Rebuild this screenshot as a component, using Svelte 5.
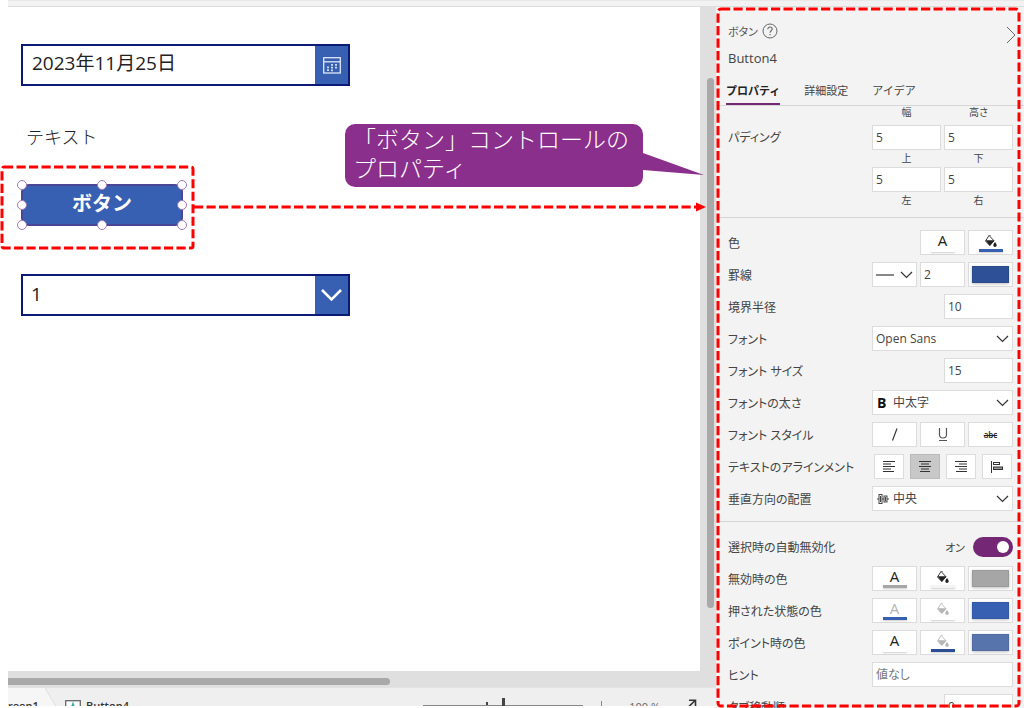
<script lang="ts">
	type Swatch = { id: string; label: string; text: string; textDim: boolean; fill: string; fillDim: boolean; border: string };

	const stateColors: Swatch[] = [
		{ id: 'disabled', label: '無効時の色', text: '#a6a6a6', textDim: false, fill: '#f4f4f4', fillDim: false, border: '#a6a6a6' },
		{ id: 'pressed', label: '押された状態の色', text: '#3860b2', textDim: true, fill: '#ffffff', fillDim: true, border: '#3860b2' },
		{ id: 'hover', label: 'ポイント時の色', text: '#ffffff', textDim: false, fill: '#2d4e95', fillDim: true, border: '#5874ad' }
	];
	const tabs = ['プロパティ', '詳細設定', 'アイデア'];
	const handles = ['nw', 'n', 'ne', 'w', 'e', 'sw', 's', 'se'];
	const aligns = [
		{ id: 'left', label: '左揃え' },
		{ id: 'center', label: '中央揃え' },
		{ id: 'right', label: '右揃え' },
		{ id: 'justify', label: '両端揃え' }
	];

	let activeTab = $state('プロパティ');
	let align = $state('center');
	let date = $state('2023年11月25日');
	let autoDisable = $state(true);
	let zoom = $state(50);
	let padding = $state({ top: 5, bottom: 5, left: 5, right: 5 });
</script>

{#snippet chevron()}
	<svg class="chevron" width="13" height="8" viewBox="0 0 13 8"><path d="M1 1l5.5 5.5L12 1" fill="none" stroke="#333" stroke-width="1.2" /></svg>
{/snippet}

{#snippet textColor(color: string, dim: boolean)}
	<button class="box" class:dim aria-label="文字の色">
		<span class="letter">A</span>
		<span class="bar" style="background: {color}"></span>
	</button>
{/snippet}

{#snippet fillColor(color: string, dim: boolean)}
	<button class="box" class:dim aria-label="塗りつぶしの色">
		<svg class="bucket" width="14" height="14" viewBox="0 0 14 14">
			<path d="M5.2 1.2L1.5 7l4.3 4.5L10 6.8 6 2.5V1" fill="none" stroke="currentColor" stroke-width="0.9" />
			<path d="M1.5 6.2h8.8l-4.5 5.5z" fill="currentColor" />
			<path d="M11 8c1 1.6 1.7 2.3 1.7 3.3a1.7 1.7 0 0 1-3.4 0c0-1 .7-1.700 1.700-3.300z" fill="currentColor" />
		</svg>
		<span class="bar" style="background: {color}"></span>
	</button>
{/snippet}

{#snippet borderColor(color: string)}
	<button class="box" aria-label="罫線の色"><span class="swatch" style="background: {color}"></span></button>
{/snippet}

<div class="studio">
	<div class="ribbon"></div>
	<div class="main">
		<div class="workspace">
			<div class="scroller">
				<main class="stage">
					<div class="field">
						<input class="date" aria-label="日付" bind:value={date} />
						<button class="field-button" aria-label="カレンダー">
							<svg width="18" height="17" viewBox="0 0 18 17" fill="none" stroke="#dfe7f6">
								<rect x="0.7" y="0.7" width="16.6" height="15.3" stroke-width="1.3" />
								<path d="M1 4.8h16" stroke-width="1.3" />
								<path d="M5 9.5v5M9 7v7.5M13 7v5" stroke-width="1.8" stroke-dasharray="1.8 0.9" />
							</svg>
						</button>
					</div>
					<p class="text">テキスト</p>
					<div class="selection">
						<button class="app-button">ボタン</button>
						{#each handles as h}
							<span class="handle {h}"></span>
						{/each}
						<svg class="mark"><rect width="100%" height="100%" rx="2" /></svg>
					</div>
					<div class="field">
						<select class="number" aria-label="ドロップダウン"><option>1</option><option>2</option><option>3</option></select>
						<span class="field-button">
							<svg width="21" height="13" viewBox="0 0 21 13"><path d="M1 1l9.5 9.5L20 1" fill="none" stroke="#fff" stroke-width="2.5" /></svg>
						</span>
					</div>
				</main>
				<div class="vscroll"><span></span></div>
			</div>
			<div class="hscroll"><span></span></div>
			<footer class="status">
				<a class="crumb" href="#screen">reen1</a>
				<svg class="slope" width="12" height="20" viewBox="0 0 12 20"><path d="M0 0l12 20H0z" fill="#f6f6f6" /><path d="M0 0l12 20" stroke="#dedede" /></svg>
				<svg class="control-icon" width="16" height="12" viewBox="0 0 16 12">
					<rect x="0.7" y="0.7" width="14.6" height="13" fill="#fff" stroke="#666" stroke-width="1.3" />
					<path d="M5.5 11L8 3.5l2.5 7.500" fill="none" stroke="#2fb5a8" stroke-width="1.5" />
				</svg>
				<a class="control-name" href="#button4">Button4</a>
				<input class="zoom" type="range" min="0" max="100" aria-label="ズーム" bind:value={zoom} />
				<span class="separator"></span>
				<span class="percent">100 %</span>
				<svg class="expand" width="10" height="10" viewBox="0 0 10 10"><path d="M0.5 9L8 1.5M2 1.2h6.5v6" fill="none" stroke="#333" stroke-width="1.6" /></svg>
			</footer>

			<svg class="connector" height="10">
				<line x1="0" y1="5" x2="100%" y2="5" />
			</svg>
			<svg class="arrow" width="10" height="10" viewBox="0 0 10 10"><path d="M0 0.5L10 5 0 9.5z" fill="#f00" /></svg>
			<div class="callout">
				「ボタン」コントロールの<br />プロパティ
				<svg class="tail" width="62" height="24" viewBox="0 0 62 24"><path d="M0 0l61 22L0 17z" fill="#8b2f8c" /></svg>
			</div>
		</div>

		<aside class="panel">
			<header>
				<div class="kind">
					ボタン
					<svg width="16" height="16" viewBox="0 0 16 16" fill="none" stroke="#666">
						<circle cx="8" cy="8" r="7" />
						<path d="M5.8 6.2c0-1.4 1-2.2 2.2-2.2s2.2.8 2.2 2c0 1.7-2.2 1.8-2.2 3.8M8 11v1.3" stroke-width="1.1" />
					</svg>
					<button class="collapse" aria-label="折りたたむ">
						<svg width="10" height="18" viewBox="0 0 10 18"><path d="M1 1l8 8-8 8" fill="none" stroke="#666" /></svg>
					</button>
				</div>
				<h1>Button4</h1>
				<nav>
					{#each tabs as tab}
						<button class="tab" class:active={tab === activeTab} onclick={() => (activeTab = tab)}>{tab}</button>
					{/each}
				</nav>
			</header>

			<section class="padding">
				<span class="name">パディング</span>
				<div class="pads">
					<span class="size">幅</span>
					<span class="size">高さ</span>
					<label><input bind:value={padding.top} />上</label>
					<label><input bind:value={padding.bottom} />下</label>
					<label><input bind:value={padding.left} />左</label>
					<label><input bind:value={padding.right} />右</label>
				</div>
			</section>

			<section>
				<div class="row">
					<span class="name">色</span>
					{@render textColor('#ffffff', false)}
					{@render fillColor('#3860b2', false)}
				</div>
				<div class="row">
					<label class="name" for="border">罫線</label>
					<button class="box line" aria-label="罫線のスタイル">
						<svg width="18" height="2" viewBox="0 0 18 2"><path d="M0 1h18" stroke="#555" stroke-width="1.4" /></svg>
						{@render chevron()}
					</button>
					<input id="border" class="narrow" value="2" />
					{@render borderColor('#2d5096')}
				</div>
				<div class="row">
					<label class="name" for="radius">境界半径</label>
					<input id="radius" value="10" />
				</div>
				<div class="row">
					<label class="name" for="font">フォント</label>
					<div class="picker">
						<select id="font"><option>Open Sans</option><option>Lato</option></select>
						{@render chevron()}
					</div>
				</div>
				<div class="row">
					<label class="name" for="font-size">フォント サイズ</label>
					<input id="font-size" value="15" />
				</div>
				<div class="row">
					<label class="name" for="weight">フォントの太さ</label>
					<div class="picker with-icon">
						<select id="weight"><option>中太字</option><option>標準</option></select>
						<b>B</b>
						{@render chevron()}
					</div>
				</div>
				<div class="row">
					<span class="name">フォント スタイル</span>
					<button class="box" aria-label="斜体">
						<svg width="8" height="13" viewBox="0 0 8 13"><path d="M6 0.5L1.5 12.5" stroke="#333" stroke-width="1.2" /></svg>
					</button>
					<button class="box" aria-label="下線">
						<svg width="12" height="14" viewBox="0 0 12 14" fill="none" stroke="#555"><path d="M2.5 0v6.5a3.5 3.5 0 0 0 7 0V0M2 12.5h8" stroke-width="1.2" /></svg>
					</button>
					<button class="box strike" aria-label="取り消し線"><s>abc</s></button>
				</div>
				<div class="row">
					<span class="name">テキストのアラインメント</span>
					<div class="aligns">
						{#each aligns as a}
							<button class="box" class:on={a.id === align} aria-label={a.label} onclick={() => (align = a.id)}>
								<svg width="14" height="14" viewBox="0 0 14 14" fill="none" stroke="#333">
									{#if a.id === 'left'}
										<path d="M1 1.5h12M1 4h8M1 6.500h12M1 9h8M1 11.500h11" />
									{:else if a.id === 'center'}
										<path d="M1 1.5h12M3 4h8M1 6.500h12M3 9h8M2 11.500h10" />
									{:else if a.id === 'right'}
										<path d="M1 1.5h12M5 4h8M1 6.500h12M5 9h8M2 11.500h11" />
									{:else}
										<path d="M1.5 1v12" />
										<rect x="3.5" y="2.5" width="6" height="2" />
										<rect x="3.5" y="7" width="9" height="2.5" fill="#999" />
									{/if}
								</svg>
							</button>
						{/each}
					</div>
				</div>
				<div class="row">
					<label class="name" for="valign">垂直方向の配置</label>
					<div class="picker with-icon">
						<select id="valign"><option>中央</option><option>上</option><option>下</option></select>
						<svg class="lead" width="12" height="12" viewBox="0 0 12 12" fill="none" stroke="#444">
							<path d="M0 6h2M5 6h2M10 6h2M3.5 3v6M8.500 4v4" />
							<rect x="2" y="1.5" width="3" height="9" />
							<rect x="7" y="3" width="3" height="6" />
						</svg>
						{@render chevron()}
					</div>
				</div>
			</section>

			<section>
				<div class="row">
					<label class="name" for="auto-disable">選択時の自動無効化</label>
					<span class="on-text">{autoDisable ? 'オン' : 'オフ'}</span>
					<input id="auto-disable" class="toggle" type="checkbox" role="switch" bind:checked={autoDisable} />
				</div>
				{#each stateColors as c (c.id)}
					<div class="row">
						<span class="name">{c.label}</span>
						{@render textColor(c.text, c.textDim)}
						{@render fillColor(c.fill, c.fillDim)}
						{@render borderColor(c.border)}
					</div>
				{/each}
				<div class="row">
					<label class="name" for="hint">ヒント</label>
					<input id="hint" class="wide" placeholder="値なし" />
				</div>
				<div class="row">
					<label class="name" for="tab-index">タブ移動順</label>
					<input id="tab-index" value="0" />
				</div>
			</section>
			<svg class="mark"><rect width="100%" height="100%" rx="3" /></svg>
		</aside>
	</div>
</div>

<style>
	:global(body) {
		background: #fff;
	}

	.studio {
		--blue: #3860b2;
		--navy: #0b1a75;
		--purple: #742774;
		--line: #dcdcdc;
		display: flex;
		flex-direction: column;
		box-sizing: border-box;
		height: 100vh;
		padding-left: 8px;
		overflow: hidden;
		font-family: 'Open Sans', 'Noto Sans CJK JP', sans-serif;
		font-size: 12px;
		color: #444;
	}

	.studio * {
		box-sizing: border-box;
	}

	button,
	input,
	select {
		font: inherit;
		color: inherit;
		margin: 0;
		border-radius: 0;
	}

	button {
		padding: 0;
		border: 0;
		background: none;
	}

	select {
		appearance: none;
		border: 0;
		background: none;
	}

	.ribbon {
		height: 7px;
		flex: none;
		background: #f2f2f2;
		border-top: 1px solid #e8e8e8;
		border-bottom: 1px solid #dedede;
	}

	.main {
		display: flex;
		flex: 1;
		min-height: 0;
	}

	.workspace {
		position: relative;
		display: flex;
		flex-direction: column;
		flex: 1;
		min-width: 0;
		padding-bottom: 2px;
	}

	.scroller {
		display: flex;
		flex: 1;
		min-height: 0;
		background: #dfdfdf;
	}

	.stage {
		flex: 1;
		display: flex;
		flex-direction: column;
		align-items: flex-start;
		padding: 37px 13px;
		background: #fff;
		color: #222;
	}

	.field {
		display: flex;
		width: 329px;
		height: 42px;
		flex: none;
		border: 2px solid var(--navy);
		background: #fff;
	}

	.field .date,
	.field .number {
		flex: 1;
		min-width: 0;
		border: 0;
		background: none;
		font-size: 19px;
		padding: 0 9px 6px;
	}

	.field .number {
		padding: 0 8px 2px;
	}

	.field-button {
		display: flex;
		align-items: center;
		justify-content: center;
		width: 33px;
		background: var(--blue);
	}

	.text {
		margin: 37px 0 0;
		padding-left: 5px;
		font-size: 18px;
		font-weight: 300;
		line-height: 28px;
	}

	.selection {
		position: relative;
		width: 162px;
		height: 42px;
		margin: 33px 0 48px;
	}

	.app-button {
		width: 100%;
		height: 100%;
		padding-bottom: 5px;
		border: 2px solid #4b4596;
		border-radius: 8px;
		background: var(--blue);
		color: #fff;
		font-size: 20px;
		font-weight: 700;
	}

	.handle {
		position: absolute;
		width: 10px;
		height: 10px;
		margin: -5px;
		border: 1px solid #a07ab0;
		border-radius: 50%;
		background: #fff;
	}

	.nw, .n, .ne {
		top: 1px;
	}

	.w, .e {
		top: 50%;
	}

	.sw, .s, .se {
		top: calc(100% - 1px);
	}

	.nw, .w, .sw {
		left: 1px;
	}

	.n, .s {
		left: 50%;
	}

	.ne, .e, .se {
		left: calc(100% - 1px);
	}

	.mark {
		position: absolute;
		overflow: visible;
		pointer-events: none;
	}

	.mark rect,
	.connector line {
		fill: none;
		stroke: #f00;
		stroke-width: 3;
		stroke-dasharray: 9.2 3.3;
	}

	.selection .mark {
		left: -19px;
		top: -17px;
		width: 191px;
		height: 81px;
	}

	.vscroll {
		width: 16px;
		padding: 71px 2px 63px 7px;
	}

	.vscroll span {
		display: block;
		height: 100%;
		border-radius: 4px;
		background: #a9a9a9;
	}

	.hscroll {
		height: 16px;
		flex: none;
		padding: 7px 0 2px;
		background: #dfdfdf;
	}

	.hscroll span {
		display: block;
		width: 54%;
		height: 7px;
		border-radius: 0 4px 4px 0;
		background: #a9a9a9;
	}

	.status {
		display: flex;
		align-items: flex-start;
		flex: none;
		height: 19px;
		overflow: hidden;
		background: #efefef;
		border-top: 1px solid #e2e2e2;
		font-size: 11px;
		line-height: 16px;
	}

	.status a {
		padding-top: 10px;
		color: #333;
		font-weight: 600;
		text-decoration: none;
	}

	.status .crumb {
		width: 37px;
		height: 100%;
		background: #f6f6f6;
	}

	.control-icon {
		margin: 12px 5px 0 8px;
	}

	.zoom {
		appearance: none;
		width: 160px;
		height: 14px;
		margin: 10px 18px 0 auto;
		background:
			linear-gradient(#888, #888) center / 100% 1px no-repeat,
			linear-gradient(#444, #444) 40% 4px / 2px 4px no-repeat;
	}

	.zoom::-webkit-slider-thumb {
		appearance: none;
		width: 3px;
		height: 14px;
		background: #444;
	}

	.separator {
		width: 1px;
		height: 14px;
		margin: 13px 27px 0 0;
		background: #888;
	}

	.percent {
		padding: 11px 27px 0 0;
		color: #666;
	}

	.expand {
		margin: 11px 19px 0 0;
	}

	.connector {
		position: absolute;
		left: 186px;
		top: 195px;
		width: calc(100% - 204px);
	}

	.arrow {
		position: absolute;
		right: 10px;
		top: 195px;
	}

	.callout {
		position: absolute;
		left: 337px;
		top: 117px;
		width: 298px;
		height: 63px;
		padding-left: 8px;
		border-radius: 10px;
		background: #8b2f8c;
		color: #fff;
		font-family: 'Noto Sans CJK JP', sans-serif;
		font-size: 23px;
		font-weight: 300;
		line-height: 29px;
		white-space: nowrap;
	}

	.tail {
		position: absolute;
		left: 100%;
		top: 29px;
	}

	.panel {
		position: relative;
		width: 308px;
		flex: none;
		overflow: hidden;
		background: #f3f3f3;
		font-feature-settings: 'palt';
	}

	.panel > .mark {
		left: 2px;
		top: 2px;
		width: calc(100% - 7px);
		height: calc(100% - 4px);
	}

	header {
		padding: 14px 8px 0 12px;
		border-bottom: 1px solid #d6d6d6;
	}

	.kind {
		display: flex;
		align-items: center;
		gap: 4px;
		height: 20px;
		font-size: 11px;
		color: #555;
	}

	.collapse {
		display: flex;
		margin: 8px 0 0 auto;
	}

	h1 {
		margin: 7px 0 12px;
		font-size: 13px;
		font-weight: 400;
		line-height: 20px;
	}

	nav {
		display: flex;
		gap: 24px;
		margin-left: -2px;
	}

	.tab {
		height: 25px;
		padding-bottom: 4px;
		border-bottom: 2px solid transparent;
		font-size: 11px;
		font-feature-settings: normal;
	}

	.tab.active {
		border-color: var(--purple);
		color: #222;
		font-weight: 700;
	}

	section {
		display: flex;
		flex-direction: column;
		gap: 7px;
		padding: 12px 11px 10px 12px;
		border-bottom: 1px solid #d6d6d6;
	}

	section.padding {
		flex-direction: row;
		padding: 0 11px 8px 12px;
	}

	.padding .name {
		padding-top: 19px;
		line-height: 25px;
	}

	.pads {
		display: grid;
		grid-template-columns: 69px 69px;
		column-gap: 3px;
		font-size: 10px;
		text-align: center;
		line-height: 17px;
	}

	.pads label {
		display: flex;
		flex-direction: column;
	}

	.size {
		height: 19px;
		line-height: 13px;
	}

	.row {
		display: flex;
		align-items: center;
		gap: 3px;
		height: 25px;
	}

	.name {
		flex: 1;
		white-space: nowrap;
	}

	.panel input:not(.toggle) {
		width: 69px;
		height: 25px;
		padding: 0 3px 1px;
		border: 1px solid var(--line);
		background: #fff;
		font-size: 12px;
	}

	.panel input.narrow {
		width: 45px;
	}

	.panel input.wide {
		width: 141px;
	}

	.wide::placeholder {
		color: #777;
	}

	.box {
		display: flex;
		flex-direction: column;
		align-items: center;
		justify-content: center;
		width: 45px;
		height: 25px;
		border: 1px solid var(--line);
		background: #fff;
		color: #222;
	}

	.box.line {
		flex-direction: row;
		gap: 6px;
	}

	.box.dim {
		color: #b5b5b5;
	}

	.letter {
		height: 16px;
		font-size: 15px;
		line-height: 15px;
	}

	.bucket {
		margin-bottom: 1px;
	}

	.bar {
		width: 24px;
		height: 3px;
		box-shadow: 0 1px 2px #0003;
	}

	.swatch {
		width: 37px;
		height: 17px;
		border: 1px solid #0001;
		box-shadow: 0 1px 3px #0004;
	}

	.box.strike {
		font-size: 8px;
		font-weight: 600;
	}

	.aligns {
		display: flex;
		gap: 6px;
		padding-right: 1px;
	}

	.aligns .box {
		width: 30px;
	}

	.box.on {
		background: #c8c8c8;
		border-color: #bbb;
	}

	.picker {
		display: grid;
		align-items: center;
		width: 141px;
		height: 25px;
		border: 1px solid var(--line);
		background: #fff;
	}

	.picker > * {
		grid-area: 1 / 1;
	}

	.picker select {
		height: 23px;
		padding: 0 3px;
	}

	.picker.with-icon select {
		padding-left: 20px;
	}

	.picker b,
	.picker .lead {
		margin-left: 4px;
		color: #111;
		font-size: 14px;
		pointer-events: none;
	}

	.picker .chevron {
		justify-self: end;
		margin-right: 3px;
		pointer-events: none;
	}

	.on-text {
		margin-right: 5px;
		font-size: 11px;
	}

	.toggle {
		appearance: none;
		display: flex;
		align-items: center;
		width: 40px;
		height: 20px;
		padding: 0 4px;
		border-radius: 10px;
		background: #999;
	}

	.toggle::before {
		content: '';
		width: 12px;
		height: 12px;
		border-radius: 50%;
		background: #fff;
	}

	.toggle:checked {
		justify-content: flex-end;
		background: var(--purple);
	}
</style>
